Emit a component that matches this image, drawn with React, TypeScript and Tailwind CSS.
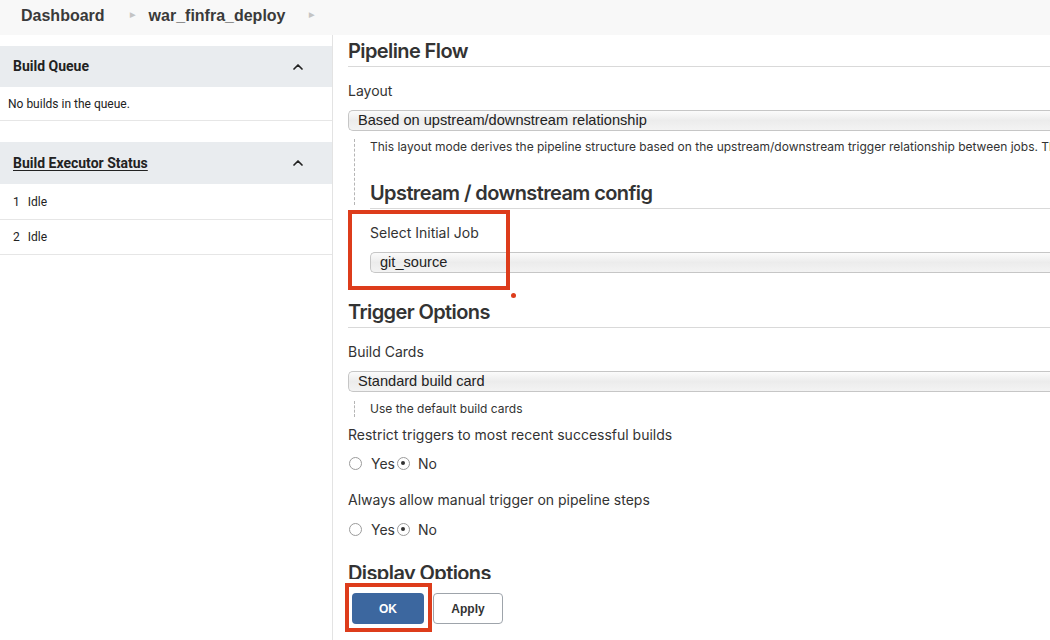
import React from 'react'
import { ChevronUp } from 'lucide-react'

const SidePanel = ({ title, underline, tall, children }: { title: string; underline?: boolean; tall?: boolean; children: React.ReactNode }) => (
  <div>
    <div className={`flex items-center justify-between bg-[#e9ecef] pl-[13px] pr-[26px] ${tall ? 'h-[42px]' : 'h-[41px]'}`}>
      <span className={`text-[14px] font-bold text-[#222] ${underline ? 'underline underline-offset-2' : ''}`}>{title}</span>
      <ChevronUp size={16} strokeWidth={2.6} className="text-[#222]" />
    </div>
    {children}
  </div>
)

const SideRow = ({ children }: { children: React.ReactNode }) => (
  <div className="h-[35px] flex items-center pl-[8px] text-[12px] text-[#222] border-b border-[#e6e6e6]">{children}</div>
)

const Heading = ({ children, className = '' }: { children: React.ReactNode; className?: string }) => (
  <div className={`text-[20px] leading-[24px] font-semibold tracking-[-0.03em] text-[#333] pb-[3px] border-b border-[#d9d9d9] ${className}`}>{children}</div>
)

const Label = ({ children, className = '' }: { children: React.ReactNode; className?: string }) => (
  <div className={`text-[14px] leading-[17px] text-[#333] ${className}`}>{children}</div>
)

const Select = ({ value, className = '' }: { value: string; className?: string }) => (
  <div
    className={`h-[21px] flex items-center pl-[9px] text-[14px] text-[#222] rounded-l-[5px] border border-r-0 border-[#c6c6c6] bg-gradient-to-b from-[#fbfbfb] via-[#ececec] to-[#f3f3f3] ${className}`}
    style={{ fontFamily: '"Liberation Sans", Arial, sans-serif', fontSize: '14.6px' }}
  >
    {value}
  </div>
)

const Radio = ({ checked }: { checked?: boolean }) => (
  <span className="w-[13px] h-[13px] rounded-full border border-[#9b9b9b] bg-white flex items-center justify-center">
    {checked && <span className="w-[4px] h-[4px] rounded-full bg-[#333]" />}
  </span>
)

const YesNo = ({ className = '' }: { className?: string }) => (
  <div className={`flex items-center h-[16px] text-[14px] text-[#333] ${className}`}>
    <span className="ml-[1px]"><Radio /></span>
    <span className="ml-[9px]">Yes</span>
    <span className="ml-[2px]"><Radio checked /></span>
    <span className="ml-[8px]">No</span>
  </div>
)

export default function App() {
  return (
    <div className="w-[1050px] h-[640px] flex flex-col overflow-hidden bg-white" style={{ fontFamily: 'Inter, "Liberation Sans", Arial, sans-serif' }}>
      {/* breadcrumb */}
      <div
        className="h-[35px] shrink-0 bg-[#f8f8f8] flex items-center pb-[4px] pl-[21px] text-[16px] font-bold text-[#3a3a3a]"
        style={{ fontFamily: '"Liberation Sans", Arial, sans-serif' }}
      >
        <span>Dashboard</span>
        <span className="ml-[25px] mr-[14px] text-[7px] text-[#c4c4c4]">▶</span>
        <span>war_finfra_deploy</span>
        <span className="ml-[23px] text-[7px] text-[#c4c4c4]">▶</span>
      </div>

      <div className="flex flex-1 min-h-0">
        {/* sidebar */}
        <aside className="w-[333px] shrink-0 border-r border-[#e3e3e3] pt-[11px]" style={{ fontFamily: 'Roboto, "Liberation Sans", sans-serif' }}>
          <SidePanel title="Build Queue">
            <div className="h-[34px] flex items-center pl-[8px] text-[12px] text-[#222] border-b border-[#e6e6e6]">No builds in the queue.</div>
          </SidePanel>
          <div className="h-[21px]" />
          <SidePanel title="Build Executor Status" underline tall>
            <div className="h-px" />
            <SideRow><span className="pl-[5px]">1</span><span className="ml-[8px]">Idle</span></SideRow>
            <SideRow><span className="pl-[5px]">2</span><span className="ml-[8px]">Idle</span></SideRow>
          </SidePanel>
        </aside>

        {/* main form */}
        <main className="flex-1 min-w-0 flex flex-col">
          <div className="flex-1 min-h-0 overflow-hidden pl-[15px] pt-[4px]">
            <Heading>Pipeline Flow</Heading>
            <Label className="mt-[15px]">Layout</Label>
            <Select value="Based on upstream/downstream relationship" className="mt-[11px]" />
            <div className="relative">
              <div className="absolute left-[6px] top-[8px] h-[66px] border-l border-dashed border-[#b5b5b5]" />
              <div className="pl-[22px] pt-[8px] text-[12px] leading-[16px] text-[#333] whitespace-nowrap">
                This layout mode derives the pipeline structure based on the upstream/downstream trigger relationship between jobs. This is the only out-of-the-box supported layout mode.
              </div>
              <div className="pl-[22px] relative">
                <Heading className="mt-[26px]">Upstream / downstream config</Heading>
                <Label className="mt-[15px]">Select Initial Job</Label>
                <Select value="git_source" className="mt-[11px]" />
                <div className="absolute left-0 top-[29px] w-[162px] h-[80px] border-[4px] border-[#dd3c1b]" />
                <div className="absolute left-[163px] top-[112px] w-[5px] h-[5px] rounded-full bg-[#dd3c1b]" />
              </div>
            </div>
            <Heading className="mt-[27px]">Trigger Options</Heading>
            <Label className="mt-[15px]">Build Cards</Label>
            <Select value="Standard build card" className="mt-[11px]" />
            <div className="ml-[6px] mt-[9px] pl-[15px] border-l border-dashed border-[#b5b5b5] text-[12px] leading-[16px] text-[#333]">
              Use the default build cards
            </div>
            <Label className="mt-[9px]">Restrict triggers to most recent successful builds</Label>
            <YesNo className="mt-[12px]" />
            <Label className="mt-[20px]">Always allow manual trigger on pipeline steps</Label>
            <YesNo className="mt-[13px]" />
            <Heading className="mt-[24px]">Display Options</Heading>
          </div>

          {/* bottom buttons */}
          <div className="h-[61px] shrink-0 bg-white flex items-start pt-[14px] pl-[19px] relative" style={{ fontFamily: '"Liberation Sans", Arial, sans-serif' }}>
            <button className="w-[72px] h-[31px] rounded-[4px] bg-[#3c679f] text-white text-[12px] font-bold">OK</button>
            <button className="ml-[9px] w-[70px] h-[31px] rounded-[4px] border border-[#9ea4ab] bg-white text-[#333] text-[12px] font-bold">Apply</button>
            <div className="absolute left-[12px] top-[4px] w-[87px] h-[49px] border-[4px] border-[#dd3c1b]" />
          </div>
        </main>
      </div>
    </div>
  )
}
